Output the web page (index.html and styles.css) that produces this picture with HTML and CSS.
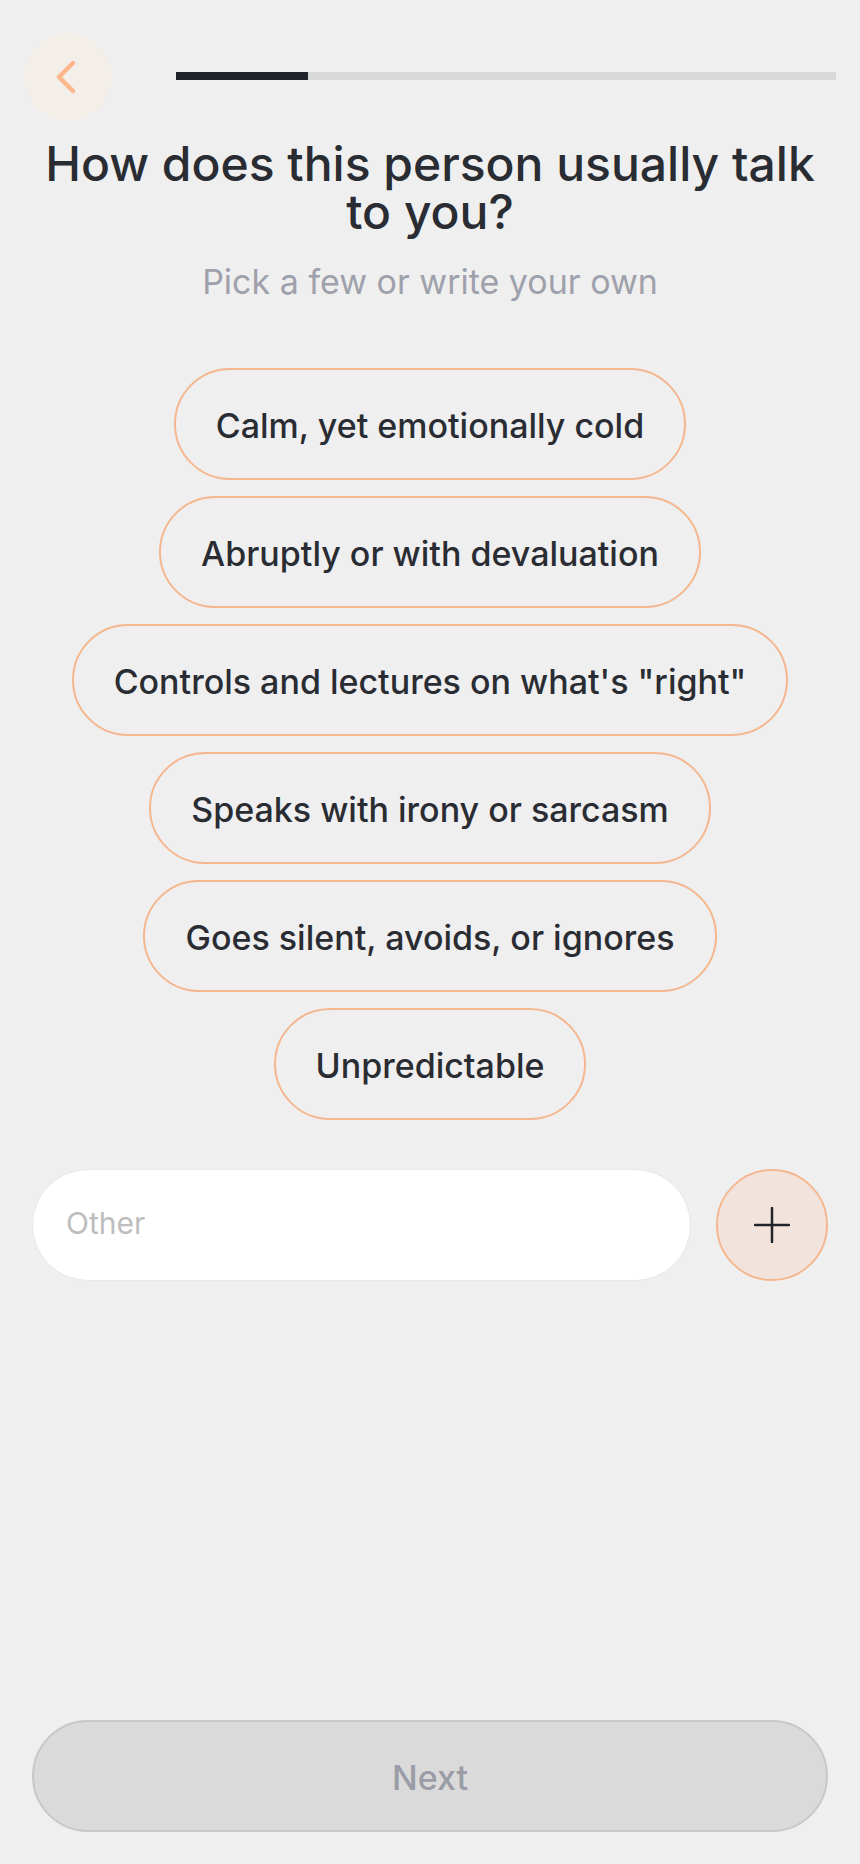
FILE: index.html
```html
<!DOCTYPE html>
<html lang="en">
<head>
  <meta charset="UTF-8" />
  <meta name="viewport" content="width=device-width, initial-scale=1.0"/>
  <title>Question</title>
  <link rel="stylesheet" href="styles.css">
</head>
<body>
  <div class="screen">
    <div class="top-bar">
      <button class="back-btn" aria-label="Back">
        <svg width="20" height="34" viewBox="0 0 20 34" fill="none">
          <path d="M17 3 L3 17 L17 31" stroke="#fcb88c" stroke-width="4.5" stroke-linecap="round" stroke-linejoin="round"/>
        </svg>
      </button>
      <div class="progress"><div class="progress-fill"></div></div>
    </div>

    <h1>How does this person usually talk to you?</h1>
    <p class="subtitle">Pick a few or write your own</p>

    <div class="options">
      <button class="chip">Calm, yet emotionally cold</button>
      <button class="chip">Abruptly or with devaluation</button>
      <button class="chip">Controls and lectures on what's "right"</button>
      <button class="chip">Speaks with irony or sarcasm</button>
      <button class="chip">Goes silent, avoids, or ignores</button>
      <button class="chip">Unpredictable</button>
    </div>

    <div class="other-row">
      <input class="other-input" type="text" placeholder="Other">
      <button class="add-btn" aria-label="Add">
        <svg width="36" height="36" viewBox="0 0 36 36" fill="none">
          <path d="M18 1 V35 M1 18 H35" stroke="#22242b" stroke-width="2.5" stroke-linecap="round"/>
        </svg>
      </button>
    </div>

    <button class="next-btn">Next</button>
  </div>
</body>
</html>
```

FILE: styles.css
```css
* {
  box-sizing: border-box;
}

body {
  font-family: 'Inter', 'Noto Sans', sans-serif;
  background: #efefef;
  color: #2a2c33;
  margin: 0;
}

button {
  font-family: inherit;
}

.screen {
  display: flex;
  flex-direction: column;
  min-height: 1864px;
  padding: 33px 32px 32px;
}

.top-bar {
  display: flex;
  align-items: center;
  margin-left: -8px;
  margin-right: -8px;
}

.back-btn {
  width: 88px;
  height: 88px;
  flex-shrink: 0;
  display: flex;
  align-items: center;
  justify-content: center;
  padding: 0 5px 0 0;
  background: #f4eee9;
  border: none;
  border-radius: 50%;
}

.progress {
  flex: 1;
  height: 8px;
  margin-left: 64px;
  margin-top: -2px;
  background: #d9d9d9;
}

.progress-fill {
  width: 20%;
  height: 100%;
  background: #22242b;
}

h1 {
  margin: 19px 0 0;
  font-size: 48px;
  line-height: 48px;
  font-weight: 500;
  text-align: center;
}

.subtitle {
  margin: 22px 0 0;
  font-size: 34px;
  line-height: 48px;
  color: #9ea1ab;
  text-align: center;
}

.options {
  display: flex;
  flex-direction: column;
  align-items: center;
  gap: 16px;
  margin-top: 62px;
}

.chip {
  height: 112px;
  padding: 2px 40px 0;
  background: transparent;
  border: 2px solid #f5b78f;
  border-radius: 56px;
  color: #2a2c33;
  font-size: 34px;
  font-weight: 500;
}

.other-row {
  display: flex;
  align-items: center;
  gap: 25px;
  margin-top: 49px;
}

.other-input {
  flex: 1;
  min-width: 0;
  height: 112px;
  padding: 0 33px 4px;
  background: #fff;
  border: 1px solid #e8e8e8;
  border-radius: 56px;
  font-family: inherit;
  font-size: 30px;
  outline: none;
}

.other-input::placeholder {
  color: #bdbdbd;
}

.add-btn {
  width: 112px;
  height: 112px;
  flex-shrink: 0;
  display: flex;
  align-items: center;
  justify-content: center;
  padding: 0;
  background: #f2e4dc;
  border: 2px solid #f5b78f;
  border-radius: 50%;
}

.next-btn {
  height: 112px;
  margin-top: auto;
  padding-top: 3px;
  background: #dadada;
  border: 2px solid #c8c8c8;
  border-radius: 56px;
  color: #9a9ca6;
  font-size: 34px;
  font-weight: 500;
}
```
